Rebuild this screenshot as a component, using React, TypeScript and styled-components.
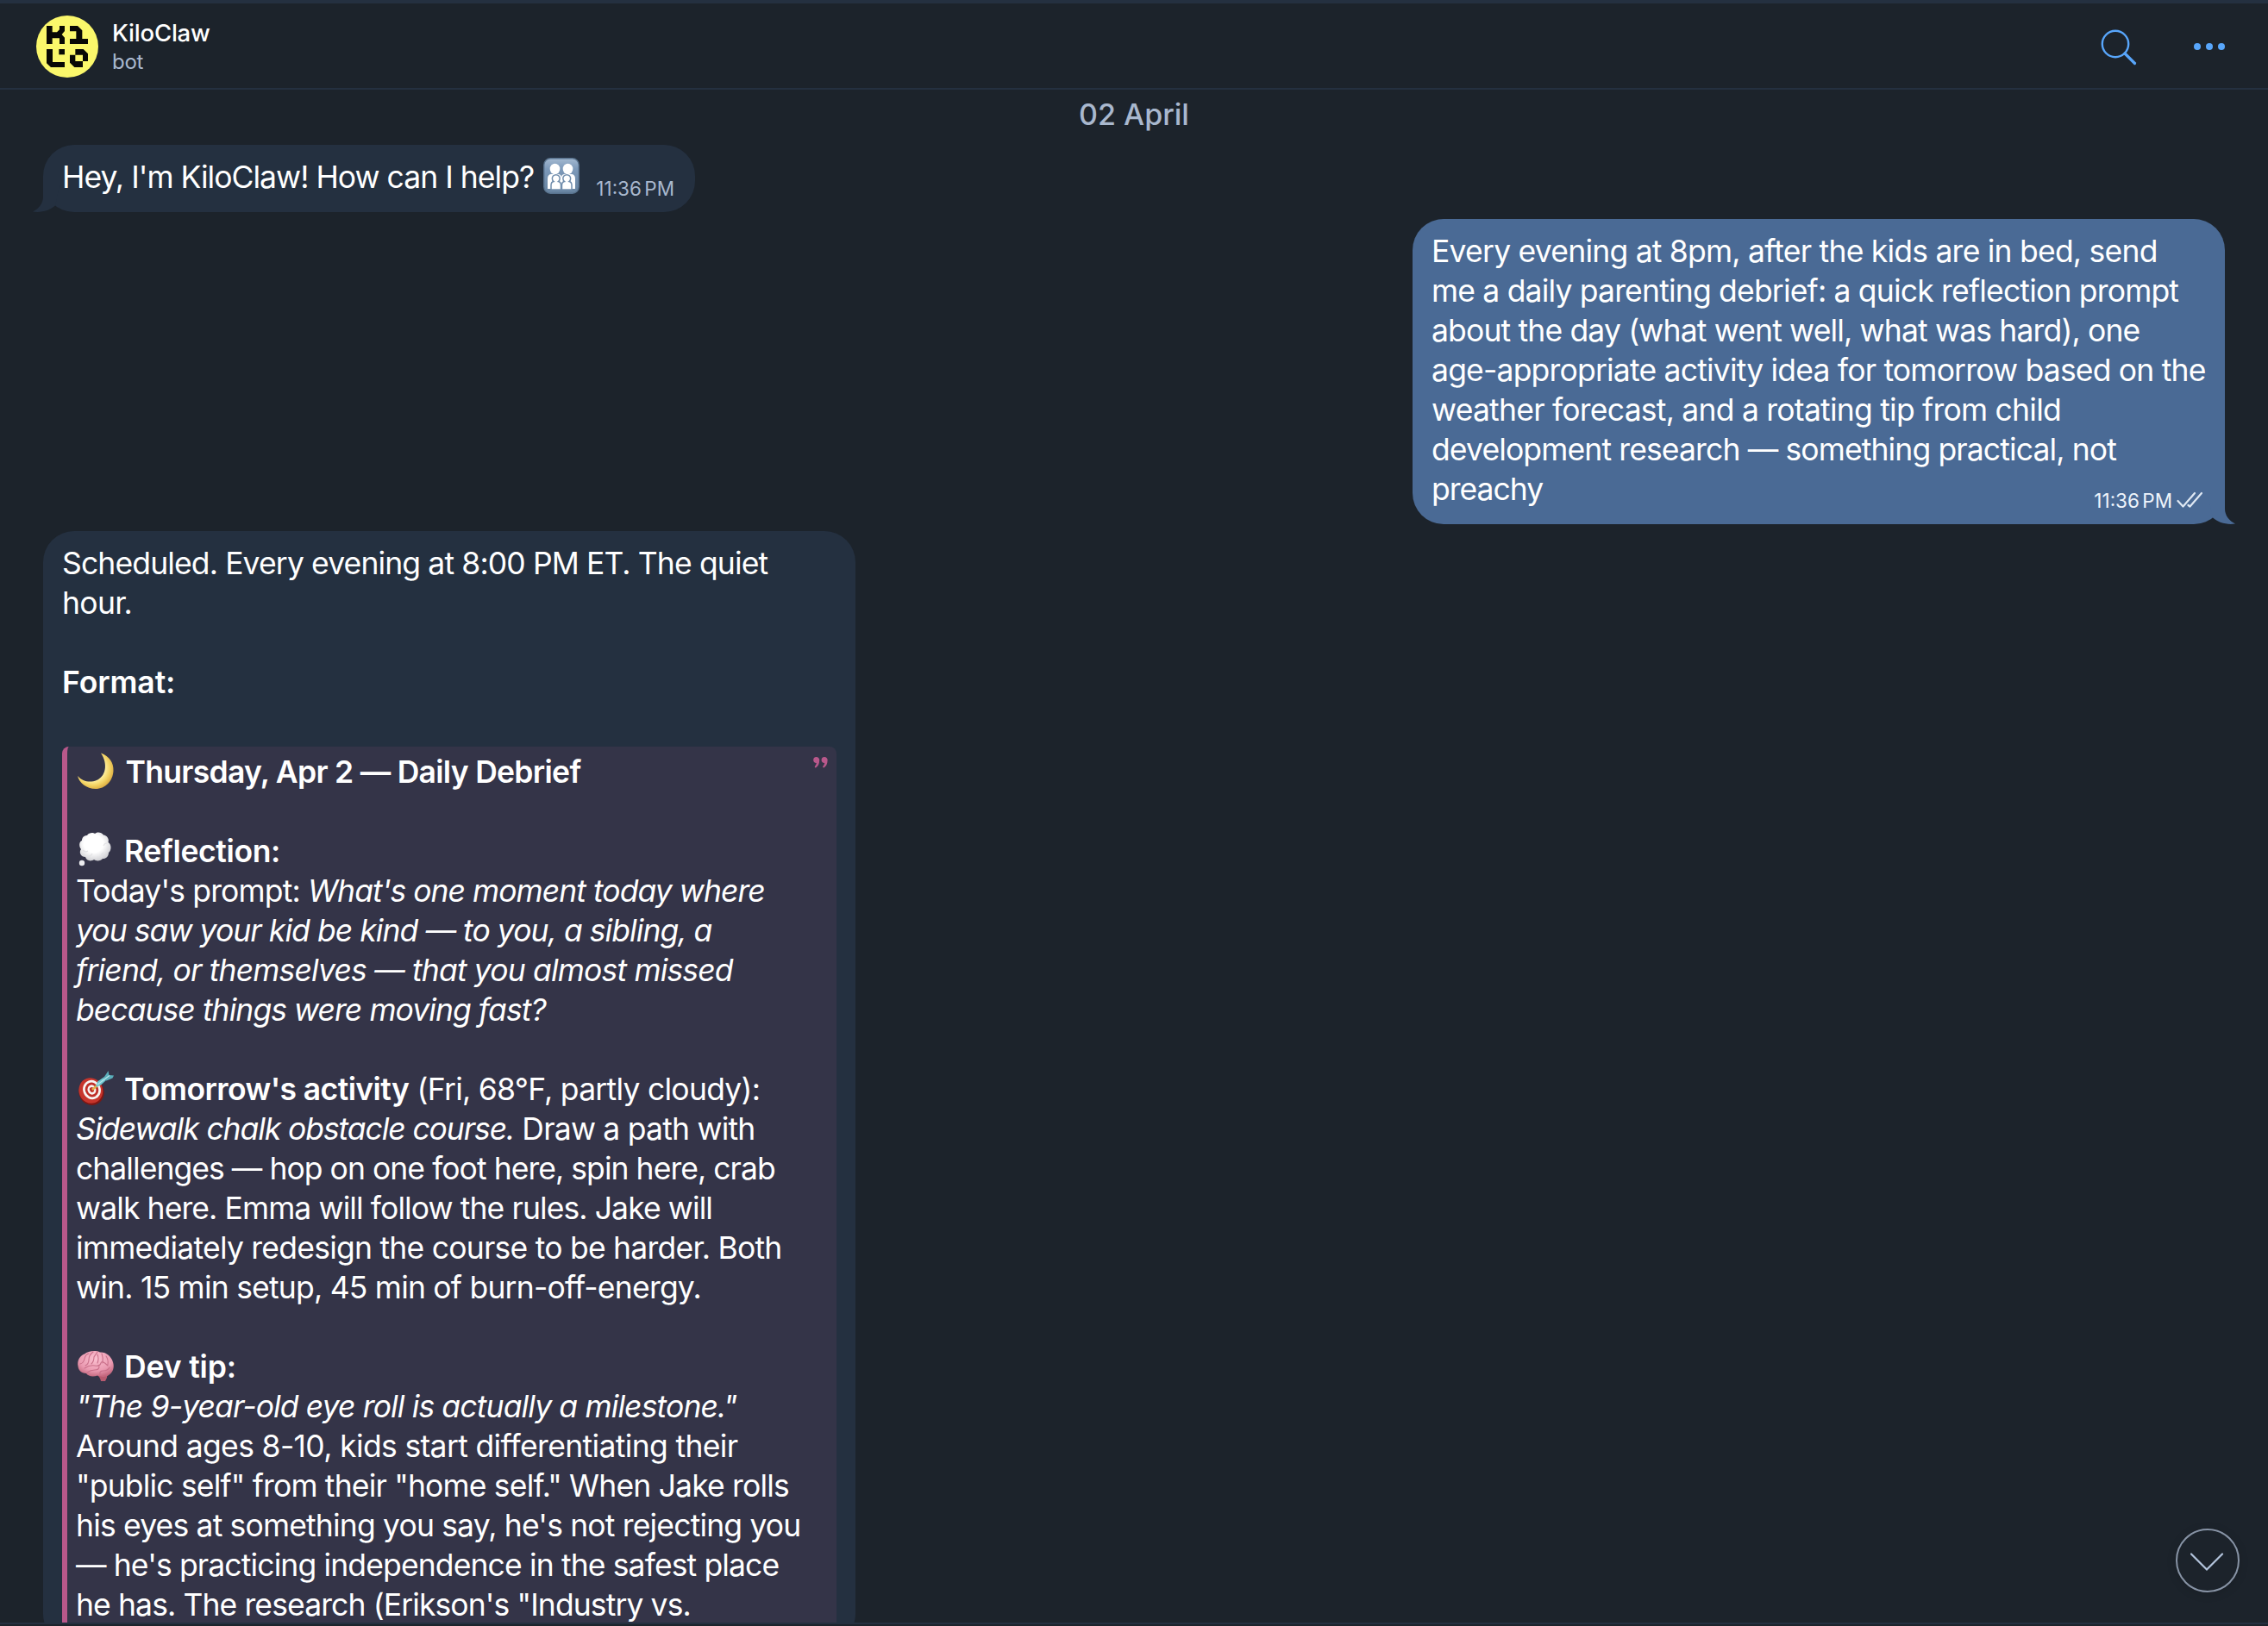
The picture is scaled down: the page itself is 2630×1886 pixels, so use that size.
import React from "react";
import styled, { createGlobalStyle } from "styled-components";

const color = {
  page: "#1c232b",
  line: "#243040",
  incoming: "#243040",
  outgoing: "#4a6a95",
  quote: "#343448",
  quoteAccent: "#b9588b",
  accent: "#58a6fb",
  muted: "#a9b8ce",
};

const GlobalStyle = createGlobalStyle`
  *, *::before, *::after { box-sizing: border-box; }
  body {
    margin: 0;
    background: ${color.page};
    color: #fff;
    font-family: Inter, "Liberation Sans", sans-serif;
  }
`;

const Window = styled.div`
  display: flex;
  flex-direction: column;
  width: 2630px;
  height: 1886px;
  overflow: hidden;
  background: ${color.page};
  border-top: 4px solid ${color.line};
`;

const Header = styled.header`
  display: flex;
  align-items: center;
  flex: none;
  height: 100px;
  padding: 2px 50px 0 42px;
  border-bottom: 2px solid ${color.line};
`;

const Peer = styled.div`
  display: flex;
  flex-direction: column;
  margin-left: 16px;
  height: 66px;
`;

const PeerName = styled.div`
  height: 36px;
  font-size: 27.5px;
  font-weight: 500;
  line-height: 34px;
  letter-spacing: -0.2px;
`;

const PeerStatus = styled.div`
  font-size: 24px;
  line-height: 34px;
  letter-spacing: -0.3px;
  color: ${color.muted};
`;

const Actions = styled.div`
  display: flex;
  align-items: center;
  gap: 66px;
  margin-left: auto;
`;

const IconButton = styled.button`
  display: flex;
  padding: 0;
  border: 0;
  background: none;
  color: ${color.accent};
`;

const Chat = styled.main`
  position: relative;
  display: flex;
  flex-direction: column;
  flex: none;
  height: 1780px;
  overflow: hidden;
  padding: 0 50px;
  border-bottom: 2px solid ${color.line};
`;

const DateLabel = styled.div`
  flex: none;
  height: 64px;
  text-align: center;
  font-size: 34px;
  font-weight: 500;
  line-height: 58px;
  color: ${color.muted};
`;

const Bubble = styled.section<{ $out?: boolean; $width: number }>`
  position: relative;
  flex: none;
  align-self: ${(p) => (p.$out ? "flex-end" : "flex-start")};
  width: ${(p) => p.$width}px;
  padding: 14px 22px 18px;
  margin-bottom: 8px;
  border-radius: 36px;
  background: ${(p) => (p.$out ? color.outgoing : color.incoming)};
`;

const TailSvg = styled.svg<{ $out?: boolean }>`
  position: absolute;
  bottom: 0;
  ${(p) => (p.$out ? "right: -12px;" : "left: -12px; transform: scaleX(-1);")}
`;

const Line = styled.div`
  display: flex;
  align-items: flex-start;
  height: 46px;
  white-space: pre;
`;

const Text = styled.span<{ $track?: number; $bold?: boolean; $italic?: boolean }>`
  flex: none;
  font-size: 35.5px;
  line-height: 48px;
  font-weight: ${(p) => (p.$bold ? 600 : 400)};
  font-style: ${(p) => (p.$italic ? "italic" : "normal")};
  letter-spacing: ${(p) => p.$track ?? 0}px;
`;

const Meta = styled.span<{ $out?: boolean }>`
  display: flex;
  flex: none;
  gap: 5px;
  margin: 13px ${(p) => (p.$out ? 4 : 2)}px 0 auto;
  font-size: 22.5px;
  line-height: 48px;
  word-spacing: -3px;
  color: ${(p) => (p.$out ? "#eef4fb" : color.muted)};
`;

const EmojiSvg = styled.svg<{ $before?: number; $after?: number }>`
  flex: none;
  overflow: visible;
  margin: 1px ${(p) => p.$after ?? 12}px 0 ${(p) => p.$before ?? 2}px;
`;

const TickSvg = styled.svg`
  margin-top: 13px;
`;

const Quote = styled.blockquote`
  position: relative;
  margin: 6px 0 0;
  padding: 6px 10px 6px 10px;
  border-left: 6px solid ${color.quoteAccent};
  border-radius: 8px;
  background: ${color.quote};
`;

const QuoteMark = styled.svg`
  position: absolute;
  top: 12px;
  right: 10px;
`;

const ScrollDown = styled.button`
  position: absolute;
  right: 33px;
  bottom: 35px;
  display: flex;
  align-items: center;
  justify-content: center;
  width: 74px;
  height: 74px;
  padding: 4px 0 0;
  border: 2px solid #8793a5;
  border-radius: 50%;
  background: ${color.page};
  box-shadow: 0 2px 12px rgba(0, 0, 0, 0.12);
`;

const Avatar = () => (
  <svg width="72" height="72" viewBox="0 0 216 216">
    <circle cx="108" cy="108" r="108" fill="#faf76b" />
    <g fill="#080805" transform="translate(-126 -54)">
      <path d="M162 90h20v22h16l9-9V90h18v18l-10 12 10 11v22h-18v-20h-25v20h-20z" />
      <path d="M243 90h27l16 16v29h20v18h-63v-18h22v-26h-22z" />
      <path d="M162 171h21v45h42v18h-48l-15-14z" />
      <path d="M205 171h20v19h-20z" />
      <path d="M262 171h28l16 16v26l-18 0v21h-29l-16-16v-27h19zm0 20v22h26v-22z" fillRule="evenodd" />
    </g>
  </svg>
);

const SearchIcon = () => (
  <svg width="44" height="44" viewBox="0 0 44 44" fill="none" stroke="currentColor">
    <circle cx="19" cy="19" r="15.2" strokeWidth="2.4" />
    <path d="M30 30l11.5 11.5" strokeWidth="3.2" strokeLinecap="round" />
  </svg>
);

const MoreIcon = () => (
  <svg width="36" height="8" viewBox="0 0 36 8" fill="currentColor">
    <circle cx="4" cy="4" r="4" />
    <circle cx="18" cy="4" r="4" />
    <circle cx="32" cy="4" r="4" />
  </svg>
);

const Tail = ({ out }: { out?: boolean }) => (
  <TailSvg $out={out} width="32" height="36" viewBox="0 0 32 36">
    <path
      d="M0 0H20V18C20 26 25 32 32 35.5C22 37 12 34 6 28.5Z"
      fill={out ? color.outgoing : color.incoming}
    />
  </TailSvg>
);

const Ticks = () => (
  <TickSvg width="30" height="20" viewBox="0 0 30 20" fill="none" stroke="#dfe8f3" strokeWidth="2.2" strokeLinecap="round" strokeLinejoin="round">
    <path d="M1.5 11l6 6.500L21 2M13.500 16l2 1.500L29 2" />
  </TickSvg>
);

const Family = () => (
  <EmojiSvg $before={11} $after={0} width="42" height="42" viewBox="0 0 42 42">
    <defs>
      <linearGradient id="fam" x1="0" y1="0" x2="0" y2="1">
        <stop offset="0" stopColor="#a3b9d1" />
        <stop offset="0.3" stopColor="#7d9aba" />
        <stop offset="1" stopColor="#66829f" />
      </linearGradient>
    </defs>
    <rect x="0.8" y="0.8" width="40.4" height="40.4" rx="7.500" fill="url(#fam)" stroke="#59738e" strokeWidth="1.400" />
    <g fill="#fff">
      <ellipse cx="13.500" cy="13" rx="5.800" ry="6.200" />
      <ellipse cx="28.500" cy="13" rx="5.800" ry="6.200" />
      <path d="M5 36V24.500q0-5.500 4.500-5.500h7.500q4 0 4 4 0-4 4-4h7.500q4.500 0 4.500 5.500V36z" />
    </g>
    <g fill="#fff" stroke="#718ead" strokeWidth="1.500">
      <path d="M9 37v-5q0-4 3-4.500a4.400 4.400 0 1 1 5.500 0q3 .5 3 4.500v5zM21.500 37v-5q0-4 3-4.500a4.400 4.400 0 1 1 5.500 0q3 .5 3 4.500v5z" />
    </g>
  </EmojiSvg>
);

const Moon = () => (
  <EmojiSvg $after={13.5} width="42" height="42" viewBox="0 0 42 42">
    <defs>
      <radialGradient id="moon" cx="0.42" cy="0.42" r="0.62">
        <stop offset="0.55" stopColor="#fff0a0" />
        <stop offset="0.78" stopColor="#f2d262" />
        <stop offset="1" stopColor="#d9a83f" />
      </radialGradient>
    </defs>
    <path d="M27 0.500C37 4 42 12 41.500 21C41 33 32 42 21 42C10 42 2 35 0 27C6 34 15 35 22 32C32 28 36 14 27 0.500Z" fill="url(#moon)" />
  </EmojiSvg>
);

const Thought = () => (
  <EmojiSvg width="42" height="42" viewBox="0 0 42 42">
    <defs>
      <radialGradient id="cloud" cx="0.45" cy="0.4" r="0.62">
        <stop offset="0.5" stopColor="#ffffff" />
        <stop offset="1" stopColor="#cfcfd3" />
      </radialGradient>
    </defs>
    <path
      d="M11 4C13 0.500 18 0.500 20 2C22 -0.500 28 0 30 3.500C34 4 37 8 35.500 12C40 15 39 22 36 24C36 29 32 31.500 29 31C27 34 21 34 19 32C15 35 10 33 9 29C4 29 1 24 4 20C1 16 2 11 5 10C5 6 8 4 11 4Z"
      fill="url(#cloud)"
    />
    <g fill="none" stroke="#e3e3e6" strokeWidth="1.200">
      <path d="M6 21q3 3 6 1M11 28q4 1 6-3M28 29q-1-4 2-5M34 13q-3 0-4 3" />
    </g>
    <circle cx="5" cy="36" r="3.200" fill="#ececef" />
  </EmojiSvg>
);

const Target = () => (
  <EmojiSvg width="42" height="42" viewBox="0 0 42 42">
    <ellipse cx="16" cy="25.500" rx="14.500" ry="15.500" fill="#7e1714" transform="rotate(-20 16 25.500)" />
    <ellipse cx="15.300" cy="24" rx="13.800" ry="14.800" fill="#c6352c" transform="rotate(-20 15.300 24)" />
    <g transform="rotate(-20 16.500 23)">
      <ellipse cx="16.500" cy="23" rx="10.300" ry="11.300" fill="#f8f4f2" />
      <ellipse cx="16.500" cy="23" rx="7.600" ry="8.500" fill="#bf2f28" />
      <ellipse cx="16.500" cy="23" rx="4.900" ry="5.700" fill="#f8f4f2" />
      <ellipse cx="16.500" cy="23" rx="2.500" ry="3" fill="#bf2f28" />
    </g>
    <path d="M17 23L25 16" stroke="#e0b04a" strokeWidth="2.600" />
    <path d="M21 20L23 13.500L31 8L33 12L27 17.500Z" fill="#6cc6cf" />
    <path d="M29.500 10L34 3.500L35.500 1L36.500 6L42 6.500L40.500 9.500L33.500 12.500Z" fill="#5aaebb" />
    <path d="M23 17L37 6.500" stroke="#b9e6ea" strokeWidth="1.200" />
  </EmojiSvg>
);

const Brain = () => (
  <EmojiSvg width="42" height="42" viewBox="0 0 42 42">
    <defs>
      <radialGradient id="brain" cx="0.5" cy="0.3" r="0.7">
        <stop offset="0" stopColor="#fbc0d0" />
        <stop offset="0.65" stopColor="#eb9bb2" />
        <stop offset="1" stopColor="#c4687f" />
      </radialGradient>
    </defs>
    <path d="M22 30h9q4 1 3 5l-2 4h-5q-1-5-5-8z" fill="#b75a6f" />
    <path
      d="M0.500 22C-1 15 3 9 8 7.500C12 4 21 3 26 5.500C33 5 39 10 41 17C43 23 41 29 36 32C32 35 26 34 23 32.500C18 34.500 12 33.500 10 30C4 30 1 26 0.500 22Z"
      fill="url(#brain)"
    />
    <g fill="none" stroke="#c9708a" strokeWidth="1.100" strokeLinecap="round">
      <path d="M3 19q4-1 5-6t5-6M9 21q4-2 4-7t5-9M16 19q3-3 3-8l4-6M23 18q2-5 0-10M29 18q1-6-1-11M35 20q1-6-2-10M8 24q6-4 12-3t7-3 8 3M11 29q4-3 9-3t5-4M26 31q-1-4 4-4t7-4" />
    </g>
  </EmojiSvg>
);

const requestLines: [string, number][] = [
  ["Every evening at 8pm, after the kids are in bed, send", -0.77],
  ["me a daily parenting debrief: a quick reflection prompt", -0.81],
  ["about the day (what went well, what was hard), one", -0.84],
  ["age-appropriate activity idea for tomorrow based on the", -0.8],
  ["weather forecast, and a rotating tip from child", -0.76],
  ["development research — something practical, not", -0.87],
];

const activityLines: [string, number][] = [
  ["challenges — hop on one foot here, spin here, crab", -0.95],
  ["walk here. Emma will follow the rules. Jake will", -0.9],
  ["immediately redesign the course to be harder. Both", -0.76],
  ["win. 15 min setup, 45 min of burn-off-energy.", -0.78],
];

const tipLines: [string, number][] = [
  ["Around ages 8-10, kids start differentiating their", -0.65],
  ['"public self" from their "home self." When Jake rolls', -0.82],
  ["his eyes at something you say, he's not rejecting you", -0.83],
  ["— he's practicing independence in the safest place", -0.87],
  ['he has. The research (Erikson\'s "Industry vs.', -0.89],
];

const Lines = ({ items }: { items: [string, number][] }) => (
  <>
    {items.map(([text, track]) => (
      <Line key={text}>
        <Text $track={track}>{text}</Text>
      </Line>
    ))}
  </>
);

export default function App() {
  return (
    <Window>
      <GlobalStyle />
      <Header>
        <Avatar />
        <Peer>
          <PeerName>KiloClaw</PeerName>
          <PeerStatus>bot</PeerStatus>
        </Peer>
        <Actions>
          <IconButton aria-label="Search">
            <SearchIcon />
          </IconButton>
          <IconButton aria-label="More">
            <MoreIcon />
          </IconButton>
        </Actions>
      </Header>
      <Chat>
        <DateLabel>02 April</DateLabel>

        <Bubble $width={756}>
          <Line>
            <Text $track={-0.97}>Hey, I'm KiloClaw! How can I help?</Text>
            <Family />
            <Meta>11:36 PM</Meta>
          </Line>
          <Tail />
        </Bubble>

        <Bubble $out $width={942}>
          <Lines items={requestLines} />
          <Line>
            <Text $track={-1}>preachy</Text>
            <Meta $out>
              11:36 PM
              <Ticks />
            </Meta>
          </Line>
          <Tail out />
        </Bubble>

        <Bubble $width={942}>
          <Line>
            <Text $track={-0.87}>Scheduled. Every evening at 8:00 PM ET. The quiet</Text>
          </Line>
          <Line>
            <Text $track={-0.7}>hour.</Text>
          </Line>
          <Line />
          <Line>
            <Text $bold $track={-0.1}>Format:</Text>
          </Line>
          <Line />
          <Quote>
            <QuoteMark width="17" height="13" viewBox="0 0 17 13" fill={color.quoteAccent}>
              <path d="M3.600 0A3.600 3.600 0 0 1 7.200 4C7.200 8 5.500 11 3 12.500Q1.500 12.500 1.800 11Q3.500 9.500 3.800 7A3.500 3.500 0 1 1 3.600 0Z" />
              <path d="M13 0A3.600 3.600 0 0 1 16.600 4C16.600 8 14.900 11 12.400 12.500Q10.900 12.500 11.200 11Q12.900 9.500 13.200 7A3.500 3.500 0 1 1 13 0Z" />
            </QuoteMark>
            <Line>
              <Moon />
              <Text $bold $track={-0.71}>Thursday, Apr 2 — Daily Debrief</Text>
            </Line>
            <Line />
            <Line>
              <Thought />
              <Text $bold $track={-0.35}>Reflection:</Text>
            </Line>
            <Line>
              <Text $track={-0.83}>{"Today's prompt: "}</Text>
              <Text $italic $track={-0.95}>What's one moment today where</Text>
            </Line>
            <Line>
              <Text $italic $track={-0.94}>you saw your kid be kind — to you, a sibling, a</Text>
            </Line>
            <Line>
              <Text $italic $track={-0.83}>friend, or themselves — that you almost missed</Text>
            </Line>
            <Line>
              <Text $italic $track={-0.94}>because things were moving fast?</Text>
            </Line>
            <Line />
            <Line>
              <Target />
              <Text $bold $track={-0.59}>Tomorrow's activity</Text>
              <Text $track={-0.73}>{" (Fri, 68°F, partly cloudy):"}</Text>
            </Line>
            <Line>
              <Text $italic $track={-1.09}>Sidewalk chalk obstacle course.</Text>
              <Text $track={-0.78}>{" Draw a path with"}</Text>
            </Line>
            <Lines items={activityLines} />
            <Line />
            <Line>
              <Brain />
              <Text $bold $track={-0.15}>Dev tip:</Text>
            </Line>
            <Line>
              <Text $italic $track={-0.87}>"The 9-year-old eye roll is actually a milestone."</Text>
            </Line>
            <Lines items={tipLines} />
          </Quote>
        </Bubble>

        <ScrollDown aria-label="Scroll to bottom">
          <svg width="40" height="22" viewBox="0 0 40 22" fill="none" stroke="#b3c4dc" strokeWidth="2.200" strokeLinecap="round">
            <path d="M1 1.500L19 19.500L37 1.500" />
          </svg>
        </ScrollDown>
      </Chat>
    </Window>
  );
}
